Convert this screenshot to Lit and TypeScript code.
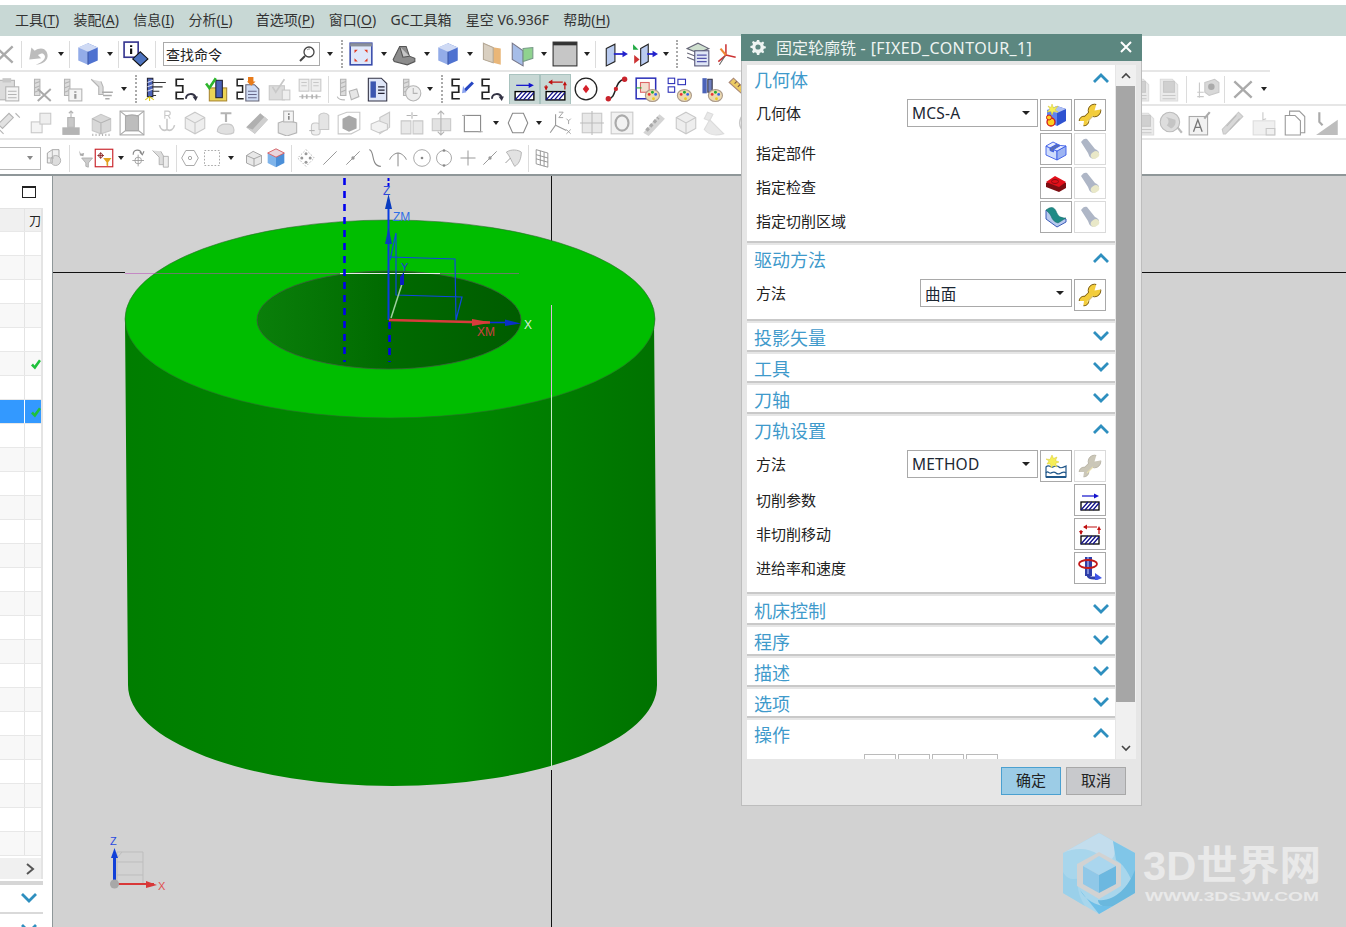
import { LitElement, html, css, svg, TemplateResult } from 'lit'
import { customElement } from 'lit/decorators.js'

// grey strokes used by the disabled toolbar icons
const G = '#b4b4b4'
const L = '#dcdcdc'
const M = '#c8c8c8'

const millShape = (c = G) => svg`<path d="M6 3h5v15H6z" fill="${L}" stroke="${c}"/><path d="M6 7l5-2M6 11l5-2M6 15l5-2" stroke="${c}"/>`
const pathS = svg`<path d="M10 3H3v6h6v6H3v6h7" fill="none" stroke="#222" stroke-width="1.6"/>`
const hatch = svg`<rect x="3" y="14" width="18" height="8" fill="#fff" stroke="#000" stroke-width="1.3"/><path d="M3 22l7-8M7 22l7-8M11 22l7-8M15 22l6-7" stroke="#11118a" stroke-width="1.3"/>`
const palette = svg`<ellipse cx="17" cy="18" rx="6.5" ry="5.5" fill="#ecd9b0" stroke="#a98"/><circle cx="14" cy="17" r="1.3" fill="#e33"/><circle cx="17" cy="15" r="1.3" fill="#2a3"/><circle cx="20" cy="17" r="1.3" fill="#36e"/><circle cx="18" cy="21" r="1.3" fill="#ec2"/>`

// open-ended spanner: shaft plus two round heads with a notch cut out of each
const spanner = (fill: string, edge: string) => svg`
	<path d="M6.5 17.500L16 8" stroke="${edge}" stroke-width="6.500"/>
	<circle cx="16.500" cy="7.500" r="6.300" fill="${fill}" stroke="${edge}"/>
	<circle cx="6" cy="18" r="4.800" fill="${fill}" stroke="${edge}"/>
	<path d="M6.500 17.500L16 8" stroke="${fill}" stroke-width="4.800"/>
	<path d="M16.500 7.500L19 -1L26 6Z" fill="#fff"/>
	<path d="M6 18L-1 18L5 25Z" fill="#fff"/>
	<path d="M15 13L9 19" stroke="#fff3b0" stroke-opacity=".6" stroke-width="1.200"/>`

const cube = svg`<path d="M12 2l9 4v12l-9 4z" fill="#4f72d0"/><path d="M12 2L3 6v12l9 4z" fill="#93ace8"/><path d="M12 2l9 4-9 4-9-4z" fill="#cfdaf4"/><path d="M12 10v12" stroke="#3c58a8"/>`

const ICONS: Record<string, TemplateResult> = {
	x: svg`<path d="M4 5l16 15M20 5L4 20" stroke="#aaa" stroke-width="2.2"/>`,
	undo: svg`<path d="M9 22c9-1 13-6 10-12-2-4-7-4-11-1L5 6l-2 11 11-1-3-3c3-2 5-2 6 0 2 3-2 7-8 9z" fill="#bcbcbc"/>`,
	cube,
	info: svg`<rect x="1" y="1" width="13" height="14" fill="#fff" stroke="#35358f" stroke-width="1.5"/><path d="M6.5 4h2v1.6h-2zM6.5 7h2v5h-2z" fill="#111"/><path d="M16 10l7 6.5-7 6.5-7-6.5z" fill="#4e74c0" stroke="#111"/>`,
	fit: svg`<rect x="2" y="2" width="20" height="20" fill="#dfe7fa" stroke="#3346a8" stroke-width="1.4"/><rect x="2" y="2" width="20" height="3" fill="#8a8f99"/><path d="M6 8h3l-3 3zM18 8h-3l3 3zM6 19h3l-3-3zM18 19h-3l3-3z" fill="#e23a22"/>`,
	shade: svg`<path d="M2 17l6-12h6l3 9 5 2v3l-7 3-12-3z" fill="#8c8c8c" stroke="#555"/><path d="M8 5l3 10 6-1" fill="#c6c6c6" stroke="#555"/>`,
	tan: svg`<path d="M5 2l10 4 6 1v15l-7-2-9-3z" fill="#e9b678"/><path d="M5 2l9 4v14l-9-3z" fill="#d9cfc0" stroke="#b4a998"/>`,
	sec: svg`<path d="M3 2l10 7v14L3 17z" fill="#a6bde8" stroke="#778"/><path d="M13 7l9-1v10l-9 3z" fill="#8fd28f" stroke="#798"/>`,
	dark: svg`<rect x="1" y="1" width="22" height="22" fill="#c6c6c6" stroke="#333"/><rect x="1" y="1" width="22" height="3" fill="#333"/>`,
	vw1: svg`<path d="M3 7l8-4v16l-8 4z" fill="#b9cbf0" stroke="#222"/><path d="M10 12h10" stroke="#2222cc" stroke-width="1.6"/><path d="M18 9l5 3-5 3z" fill="#2222cc"/>`,
	vw2: svg`<path d="M8 7l7-4v16l-7 4z" fill="#b9cbf0" stroke="#222"/><path d="M1 3l5 5H1z" fill="#22aa44"/><path d="M2 13l5 4-5 4z" fill="#cc3333"/><path d="M14 12h6" stroke="#2222cc" stroke-width="1.6"/><path d="M19 9l5 3-5 3z" fill="#2222cc"/>`,
	layers: svg`<path d="M2 7l10-5 10 5-10 4z" fill="#cfe0cf" stroke="#667"/><path d="M2 11l10 4 10-4M2 15l10 4 10-4" fill="none" stroke="#667"/><rect x="9" y="9" width="13" height="14" fill="#dfe6f6" stroke="#557"/><path d="M11 13h9M11 16h9M11 19h9" stroke="#55a"/>`,
	axes: svg`<path d="M11 13V3M11 13l9 2M11 13l-7 6" stroke="#c33" stroke-width="1.4" fill="none"/><path d="M11 13l-5-6" stroke="#e83" stroke-width="2"/><path d="M10 14l-5 8" stroke="#666"/>`,
	clip: svg`<rect x="3" y="4" width="14" height="18" fill="${L}" stroke="${G}"/><rect x="6" y="2" width="8" height="4" fill="${M}"/><rect x="9" y="10" width="12" height="13" fill="#f4f4f4" stroke="${G}"/><path d="M11 14h8M11 17h8M11 20h8" stroke="${G}"/>`,
	millx: svg`${millShape()}<path d="M9 12l12 11M21 12L9 23" stroke="#aaa" stroke-width="1.8"/>`,
	milli: svg`${millShape()}<rect x="10" y="12" width="12" height="11" fill="#f4f4f4" stroke="${G}"/><path d="M15 14h2v1.5h-2zM15 16.500h2V21h-2z" fill="#999"/>`,
	millf: svg`<path d="M2 3l7 7v7h4v-7l-2-5" fill="${L}" stroke="${G}"/><path d="M12 15h10M13 18h8M15 21h4" stroke="#aaa" stroke-width="1.4"/>`,
	millb: svg`<path d="M5 2h5v17H5z" fill="#4b63b8" stroke="#223"/><path d="M5 6l5-2M5 10l5-2M5 14l5-2" stroke="#dde"/><path d="M10 6h12M10 10h9M10 14h6M10 18h3" stroke="#333"/><path d="M7 19l-4 3M7 19l4 3M7 19v4" stroke="#dc2"/>`,
	patha: svg`${pathS}<path d="M12 21c0-5 7-6 9-1" fill="none" stroke="#334" stroke-width="1.8"/><path d="M18 19h5l-2 4z" fill="#334"/>`,
	check: svg`<rect x="4" y="11" width="16" height="12" fill="#ecd455" stroke="#a83"/><rect x="10" y="4" width="6" height="16" fill="#4b63b8" stroke="#223"/><path d="M1 7l3 4 6-9" fill="none" stroke="#2db52d" stroke-width="2.4"/>`,
	pathd: svg`<path d="M8 3H2v6h5v6H2v6h6" fill="none" stroke="#222" stroke-width="1.4"/><path d="M10 8h8l4 4v11H10z" fill="#cfdcf5" stroke="#667"/><path d="M12 14h8M12 17h8M12 20h8" stroke="#668"/><path d="M12 1h5v4h2l-4 4-4-4h1z" fill="#e87b1a"/>`,
	gcheck: svg`<rect x="3" y="9" width="14" height="13" fill="${L}" stroke="${M}"/><path d="M6 10l3 5 8-12" fill="none" stroke="${M}" stroke-width="1.6"/><rect x="15" y="13" width="7" height="9" fill="#eee" stroke="${M}"/>`,
	gdocs: svg`<rect x="2" y="3" width="9" height="11" fill="#eee" stroke="${M}"/><rect x="13" y="3" width="9" height="11" fill="#eee" stroke="${M}"/><path d="M4 6h5M4 9h5M15 6h5M15 9h5M2 19h20" stroke="${M}"/><path d="M5 17v4M9 17v4M14 17v4M18 17v4" stroke="${G}" stroke-width="1.6"/>`,
	gtool: svg`${millShape()}<path d="M14 14l7-2 2 7-7 3z" fill="#e6e6e6" stroke="${G}"/><path d="M3 19c1 3 4 3 7 3" fill="none" stroke="${G}"/>`,
	docb: svg`<path d="M4 2h12l5 5v16H4z" fill="#dfe6f8" stroke="#334"/><rect x="6" y="5" width="5" height="15" fill="#3b56b0"/><path d="M13 10h6M13 13h6M13 16h6" stroke="#223"/>`,
	clock: svg`${millShape()}<circle cx="15" cy="16" r="7" fill="#eee" stroke="${G}"/><path d="M15 11v5h4" fill="none" stroke="${G}"/>`,
	pathf: svg`${pathS}<path d="M13 13l8-8 2 2-8 8z" fill="#2746c2"/><path d="M13 9l3 6-4 1z" fill="#8aa2ee"/>`,
	cut: svg`<path d="M4 8h13" stroke="#1212cc" stroke-width="1.2"/><path d="M16 5.500l5 2.500-5 2.500z" fill="#1212cc"/>${hatch}`,
	noncut: svg`<path d="M6 5h13M3 8v4M21 12V7" stroke="#c01010" stroke-width="1.2"/><path d="M9 2.500L5 5l4 2.500zM1 9h4l-2 4zM19 8h4l-2-4z" fill="#c01010"/>${hatch}`,
	circle: svg`<circle cx="12" cy="12" r="10" fill="#fff" stroke="#222" stroke-width="1.2"/><path d="M12 8l3 4-3 4-3-4z" fill="#d5202a"/>`,
	curve: svg`<path d="M4 21c8 0 5-17 15-18" fill="none" stroke="#222" stroke-width="1.4"/><circle cx="4" cy="21" r="2.500" fill="#c9242c"/><circle cx="19" cy="3" r="2.500" fill="#c9242c"/><circle cx="11" cy="12" r="2" fill="#c9242c"/>`,
	frame: svg`<rect x="2" y="2" width="18" height="19" fill="#fff" stroke="#2b2fb8" stroke-width="1.4"/><rect x="6" y="6" width="8" height="9" fill="#f2dfd0" stroke="#d66"/><path d="M2 11h5" stroke="#2a3"/>${palette}`,
	tree: svg`<rect x="2" y="2" width="6" height="5" fill="#fff" stroke="#2b2fb8"/><rect x="2" y="10" width="6" height="5" fill="#fff" stroke="#2b2fb8"/><rect x="11" y="3" width="7" height="5" fill="#fff" stroke="#2b2fb8"/>${palette}`,
	millp: svg`<path d="M5 2h4v14H5z" fill="#4b63b8"/><path d="M10 3h4v12h-4z" fill="#6f7fbf" stroke="#334"/>${palette}`,
	ruler: svg`<path d="M2 6l4-4 19 18-4 3z" fill="#eccb62" stroke="#a87"/><path d="M7 7l2-2M10 10l2-2M13 13l2-2M16 16l2-2" stroke="#754"/>`,
	wire: svg`<path d="M12 2l9 5v10l-9 5-9-5V7z" fill="#eee" stroke="${M}"/><path d="M3 7l9 5 9-5M12 12v10" stroke="${M}" fill="none"/>`,
	rsq: svg`<path d="M2 13l10-10 4 4-10 10z" fill="#e2e2e2" stroke="${G}"/><path d="M18 3l4 4M3 18l4 4" stroke="${G}"/>`,
	copy: svg`<rect x="3" y="11" width="10" height="10" fill="#f4f4f4" stroke="${M}"/><rect x="11" y="3" width="10" height="10" fill="#eee" stroke="${M}"/>`,
	ped: svg`<rect x="4" y="16" width="16" height="7" fill="${G}"/><rect x="9" y="7" width="6" height="9" fill="${M}" stroke="${G}"/><path d="M12 7V1M10 3l2-2 2 2" fill="none" stroke="${G}"/>`,
	boxr: svg`<path d="M3 8l8-4 9 4v11l-9 3-8-3z" fill="#d8d8d8" stroke="${M}"/><path d="M3 8l8 4 9-4M11 12v10" fill="none" stroke="${G}"/><path d="M3 23h18" stroke="${G}" stroke-width="2" stroke-dasharray="1 2"/>`,
	wsol: svg`<rect x="1" y="1" width="22" height="22" fill="none" stroke="#aaa"/><path d="M1 1l5 4h12l5-4M1 23l5-4h12l5 4" fill="none" stroke="#aaa"/><path d="M6 6c3-2 9-2 12 0v13H6z" fill="#bdbdbd" stroke="#aaa"/>`,
	hook: svg`<path d="M12 8v10c-3 2-6 0-7-4M12 18c3 2 6 0 7-4" fill="none" stroke="${M}" stroke-width="1.4"/><path d="M10 1h3a2 2 0 0 1 0 4h-3zM10 1v7M13 5l2 3" fill="none" stroke="${M}"/>`,
	lathe: svg`<path d="M4 20c0-6 5-7 7-7h3c5 0 6 5 5 8-3 2-11 2-15-1z" fill="#e0e0e0" stroke="${M}"/><path d="M7 3h10M12 3v8" stroke="${G}" stroke-width="2"/>`,
	wedge: svg`<path d="M2 16L15 3l7 6-12 13z" fill="#b0b0b0"/><path d="M2 16l8 6 12-13-3-3-11 12z" fill="#cfcfcf"/>`,
	boxi: svg`<path d="M3 12l8-3 9 3v9l-9 3-8-3z" fill="#e4e4e4" stroke="${G}"/><rect x="8" y="1" width="9" height="10" fill="#f4f4f4" stroke="${G}"/><path d="M12 3h1.500v1.500H12zM12 5.500h1.500V9H12z" fill="#888"/>`,
	cyls: svg`<rect x="5" y="12" width="8" height="11" rx="3" fill="#eee" stroke="${M}"/><path d="M12 5c2-3 7-3 9 0v13h-9z" fill="#e4e4e4" stroke="${M}"/><path d="M3 19h5" stroke="${G}"/>`,
	wbox: svg`<path d="M2 5l8-3h12v16l-8 4H2z" fill="none" stroke="${M}"/><path d="M6 8l6-3 7 3v9l-7 3-6-3z" fill="#a8a8a8"/>`,
	plane: svg`<path d="M10 7l9-5v14l-9 6z" fill="#e6e6e6" stroke="${M}"/><path d="M2 13l7-3 8 3v5l-8 3-7-3z" fill="#f2f2f2" stroke="${M}"/>`,
	twins: svg`<path d="M2 10h9v12H2zM13 10h9v12h-9z" fill="#e8e8e8" stroke="${M}"/><path d="M7 5h4M17 5h-4M12 2v6" stroke="${G}"/>`,
	carr: svg`<path d="M3 8h17v11H3z" fill="#e2e2e2" stroke="${M}"/><path d="M11 1v22M8 4l3-3 3 3M8 20l3 3 3-3" fill="none" stroke="${G}"/>`,
	sq: svg`<rect x="4" y="5" width="15" height="15" fill="none" stroke="#888"/><path d="M2 5h4M17 20h4" stroke="#aaa"/>`,
	hex: svg`<path d="M7 3h10l4 9-4 9H7l-4-9z" fill="none" stroke="#888"/>`,
	xyz: svg`<path d="M7 14V4M7 14l10 5M7 14l-5 7" stroke="#999" fill="none"/><path d="M10 2h4l-4 5h4M17 8l2 2 2-2M19 10v3M17 18l4 4M21 18l-4 4" fill="none" stroke="#999" stroke-width=".8"/>`,
	csq: svg`<rect x="3" y="3" width="18" height="18" fill="#e8e8e8" stroke="${M}"/><path d="M12 1v22M1 12h22" stroke="#bbb"/>`,
	osq: svg`<rect x="2" y="2" width="20" height="20" fill="#f2f2f2" stroke="${M}"/><ellipse cx="12" cy="12" rx="6" ry="7" fill="none" stroke="#aaa" stroke-width="2"/>`,
	tex: svg`<path d="M3 21L18 4l5 4-15 16z" fill="#d4d4d4"/><path d="M6 19l11-12" stroke="#aaa" stroke-width="3" stroke-dasharray="3 2"/>`,
	lamp: svg`<path d="M6 2l-3 6 5 2 3-6zM8 9L3 18c4 5 11 6 18 4z" fill="#e8e8e8" stroke="${L}"/>`,
	paren: svg`<path d="M14 2C6 8 6 16 14 22" fill="none" stroke="${M}" stroke-width="1.4"/>`,
	gbase: svg`<path d="M4 3h11l5 5v15H4z" fill="#eaeaea" stroke="${L}"/><rect x="7" y="5" width="10" height="10" fill="#d0d0d0" stroke="${M}"/><path d="M6 18h12M6 21h12" stroke="${M}"/>`,
	gcam: svg`<path d="M3 15h6M5 6v14M3 19h6" stroke="${M}"/><path d="M10 6l9-3 4 3v9l-9 3-4-3z" fill="#d8d8d8" stroke="${M}"/><circle cx="16" cy="10" r="3" fill="#aaa"/>`,
	globe: svg`<circle cx="11" cy="11" r="9" fill="#ddd" stroke="#bbb"/><path d="M6 6c4 1 5 6 2 8l4 3c3-1 5-4 4-8" fill="#c4c4c4"/><path d="M18 16l4 5" stroke="#bbb" stroke-width="2"/>`,
	bigA: svg`<rect x="2" y="6" width="17" height="17" fill="#f2f2f2" stroke="#aaa"/><path d="M6 20l4-11 4 11M7.500 16h5" fill="none" stroke="#777" stroke-width="1.200"/><path d="M16 8l5-6" stroke="#aaa" stroke-width="2"/>`,
	rod: svg`<path d="M4 22L3 18 18 2l4 4L6 22z" fill="#d8d8d8" stroke="${M}"/><path d="M7 15l9-10M10 18l9-10" stroke="#bbb"/>`,
	tab: svg`<rect x="2" y="10" width="20" height="13" fill="#f0f0f0" stroke="${L}"/><path d="M11 2v7l3-1M14 17h8v6h-8z" fill="none" stroke="${M}"/>`,
	pages: svg`<path d="M7 1h9l5 5v15H7z" fill="#fff" stroke="#999"/><path d="M3 5h9l5 5v13H3z" fill="#fff" stroke="#999"/>`,
	slope: svg`<path d="M1 23h20V9z" fill="#bdbdbd"/><path d="M4 2v9l3 3" fill="none" stroke="#aaa" stroke-width="2"/>`,
	grid: svg`<path d="M4 6l6-4h8v10l-6 6H4z" fill="#f0f0f0" stroke="#999"/><circle cx="14" cy="15" r="6" fill="#ddd" stroke="#aaa"/><path d="M4 12h8M10 2v16" stroke="#aaa"/>`,
	filt: svg`<path d="M5 3l2 4 4-1-1 4-4-1z" fill="#aaa"/><path d="M8 12h13l-5 6v5l-3-1v-4z" fill="#ccc" stroke="#aaa"/>`,
	filtr: svg`<rect x="1.500" y="1.500" width="21" height="21" fill="#fff" stroke="#c9242c" stroke-width="1.4"/><path d="M8 5v8M4 9h8" stroke="#822"/><circle cx="8" cy="9" r="2.500" fill="none" stroke="#822"/><path d="M11 12h10l-4 5v5l-2-1v-4z" fill="#e2a21e"/>`,
	target: svg`<path d="M11 8v14M4 15h14" stroke="#999"/><circle cx="11" cy="15" r="4" fill="none" stroke="#999"/><path d="M5 8c0-7 9-7 10-1M13 5l3 3 2-4" fill="none" stroke="#888" stroke-width="1.4"/>`,
	gfilt: svg`<path d="M3 3l8 8v9h6v-9l-4-7" fill="#ddd" stroke="#aaa"/><path d="M16 10h6v13h-6z" fill="#eee" stroke="#aaa"/>`,
	hexo: svg`<path d="M7 3h10l5 9-5 9H7l-5-9z" fill="none" stroke="#999"/><circle cx="12" cy="12" r="2" fill="none" stroke="#999"/>`,
	dots: svg`<path d="M3 3h18v18H3z" fill="none" stroke="#999" stroke-dasharray="2 2"/>`,
	gbox: svg`<path d="M3 9l8-5 10 5v9l-9 4-9-4z" fill="#e8e8e8" stroke="#999"/><path d="M3 9l9 4 9-4M12 13v9" fill="none" stroke="#999"/>`,
	bbox: svg`<path d="M12 1l10 5v12l-10 5z" fill="#4b8fd8"/><path d="M12 1L2 6v12l10 5z" fill="#7fb4ea"/><path d="M12 1l10 5-10 5L2 6z" fill="#e9d5dc" stroke="#d55"/>`,
	ddots: svg`<path d="M12 2l10 10-10 10L2 12z" fill="none" stroke="#aaa" stroke-dasharray="2 2"/><circle cx="12" cy="7" r="1.800" fill="#999"/><circle cx="7" cy="12" r="1.800" fill="#999"/><circle cx="17" cy="12" r="1.800" fill="#999"/><circle cx="12" cy="17" r="1.800" fill="#999"/>`,
	line: svg`<path d="M4 20L20 4" stroke="#999" stroke-width="1.2"/>`,
	lined: svg`<path d="M4 20L20 4" stroke="#999" stroke-width="1.2"/><circle cx="12" cy="12" r="2" fill="#999"/>`,
	scurve: svg`<path d="M5 2c2 0 3 2 4 6 1 5 2 14 10 14" fill="none" stroke="#888" stroke-width="1.3"/>`,
	fork: svg`<path d="M12 22V6M2 14c2-5 7-8 10-8s8 3 10 8" fill="none" stroke="#888" stroke-width="1.2"/>`,
	cdot: svg`<circle cx="12" cy="12" r="10" fill="none" stroke="#999"/><circle cx="12" cy="12" r="1.600" fill="#888"/>`,
	cring: svg`<circle cx="12" cy="12" r="9" fill="none" stroke="#999"/><circle cx="12" cy="3" r="1.600" fill="#888"/><circle cx="12" cy="21" r="1.600" fill="#888"/>`,
	plus: svg`<path d="M12 3v18M3 12h18" stroke="#999" stroke-width="1.2"/>`,
	surf: svg`<path d="M4 5c6-4 14-3 18 0 0 6-2 14-8 17C10 16 8 9 4 5z" fill="#e2e2e2" stroke="#aaa"/><path d="M3 18l6-6" stroke="#888"/>`,
	mesh: svg`<path d="M5 2l14 4v17L5 19z" fill="none" stroke="#888"/><path d="M10 3.500v17M14.500 5v17M5 8l14 4M5 13l14 4" stroke="#888"/>`,
	// dialog icons
	create: svg`<path d="M13 3l9 3v12l-9 5z" fill="#2e52d0"/><path d="M13 3L3 7v11l10 5z" fill="#5f82ee"/><path d="M3 7l10-4 9 3-9 4z" fill="#aebff4"/><path d="M8 1l1.500 4L14 3l-3 4 3 2-4.500-.5L8 12 7 8.500 3 9l3-3-2-3 3 1.500z" fill="#f5ee56" stroke="#d8c830" stroke-width=".5"/><circle cx="7" cy="19" r="4" fill="#ffcf20" stroke="#d01818" stroke-width="1.3"/><circle cx="5" cy="14.500" r="2.500" fill="#ffcf20" stroke="#d01818"/>`,
	wrench: spanner('#f3cd3c', '#7d5e10'),
	wrenchg: spanner('#cbc7b8', '#bab6a8'),
	part: svg`<g stroke="#3a5be6" stroke-width=".9" stroke-linejoin="round">
		<path d="M2 9V18L13 23V14Z" fill="#cfdcfb"/>
		<path d="M13 14V23L22 18V9Z" fill="#9db4f2"/>
		<path d="M6 11L13 7L16.500 8.500L9.500 12.500V15L6 13.500Z" fill="#5a6fb0"/>
		<path d="M2 9L9 5L13 7L6 11Z" fill="#e6ecff"/>
		<path d="M9.500 12.500L16.500 8.500L22 9L13 14Z" fill="#e6ecff"/>
	</g>`,
	torch: svg`<path d="M3 5c2-3 4-4 6-3l8 10c2 1 4 2 4 4 0 4-5 7-8 5-2-1-2-3-3-5z" fill="#aeb6c6"/><ellipse cx="17" cy="18" rx="4.500" ry="3.500" transform="rotate(-35 17 18)" fill="#e9e8c8"/>`,
	red: svg`<path d="M2 12l9-6 11 6v5l-7 4-13-5z" fill="#7d0d12"/><path d="M2 11l9-6 11 6-7 5z" fill="#e30f1a"/><ellipse cx="11" cy="10.500" rx="3.500" ry="2" fill="none" stroke="#8d0d12"/>`,
	teal: svg`<path d="M2 5v9l11 8 9-5v-3l-9-2z" fill="#b8c9ee" stroke="#3a5ab8"/><path d="M2 5c5-4 8-3 10 1 2 5 4 7 10 7l-8 5c-4-1-6-4-7-7-1-2-3-4-5-6z" fill="#1f8a86" stroke="#146b68" stroke-width=".5"/>`,
	method: svg`<path d="M2 13c3-3 5 1 7 0s4-2 6 0 5 0 7-1v11H2z" fill="#fff" stroke="#20578a" stroke-width="1.200"/><path d="M2 19c2-3 3 1 5 0s3-2 5 0 3 1 5 0 3-2 5 0" fill="none" stroke="#20578a" stroke-width="1.200"/><path d="M2 23h20" stroke="#20578a" stroke-width="2"/><path d="M8 1l1.500 3.500L13 3l-1.500 3.500L15 8l-3.500 1.500L13 13 9 11l-2 3-.5-4L3 10l2-3-3-2 4 .5z" fill="#f5ee56" stroke="#d8c830" stroke-width=".5"/>`,
	feed: svg`<rect x="7" y="1" width="7" height="19" fill="#2f3fa8"/><path d="M10 1v19" stroke="#98a5e4" stroke-width="1.500"/><ellipse cx="10" cy="8" rx="9" ry="4" fill="none" stroke="#c21818" stroke-width="1.800"/><path d="M10 18c0 4 3 4 6 4h2" fill="none" stroke="#2f3fa8" stroke-width="3"/><path d="M17 17l7 5-7 3z" fill="#3f55e8"/>`,
	chk: svg`<path d="M2 13l4-4 3 4 9-12 4 3-12 17z" fill="#1fc13c"/>`,
}

const icon = (name: string) => html`<svg viewBox="0 0 24 24" class="glyph">${ICONS[name]}</svg>`

type Item = [number, string]

const ROW1: Item[] = [[4, 'x'], [21, '|'], [39, 'undo'], [61, 'v'], [69, '|'], [88, 'cube'], [110, 'v'], [118, '|'], [136, 'info'], [155, '|'], [241.5, 'search'], [330, 'v'], [342, ':'], [361, 'fit'], [384, 'v'], [404, 'shade'], [427, 'v'], [448, 'cube'], [470, 'v'], [491, 'tan'], [522, 'sec'], [544, 'v'], [565, 'dark'], [587, 'v'], [595, '|'], [616, 'vw1'], [645, 'vw2'], [666, 'v'], [677, ':'], [698, 'layers'], [727, 'axes']]
const ROW2: Item[] = [[9, 'clip'], [41, 'millx'], [71, 'milli'], [102, 'millf'], [124, 'v'], [136, ':'], [155, 'millb'], [186, 'patha'], [218, 'check'], [248, 'pathd'], [279, 'gcheck'], [310, 'gdocs'], [328, '|'], [347, 'gtool'], [377, 'docb'], [410, 'clock'], [430, 'v'], [442, ':'], [462, 'pathf'], [492, 'patha'], [524.5, '#cut'], [555.5, '#noncut'], [586, 'circle'], [617, 'curve'], [647, 'frame'], [679, 'tree'], [710, 'millp'], [740, 'ruler'], [1140, 'gbase'], [1169, 'gbase'], [1186, '|'], [1207, 'gcam'], [1224, '|'], [1243, 'x'], [1264, 'v']]
const ROW3: Item[] = [[9, 'rsq'], [41, 'copy'], [71, 'ped'], [102, 'boxr'], [132, 'wsol'], [167, 'hook'], [195, 'wire'], [226, 'lathe'], [257, 'wedge'], [288, 'boxi'], [319, 'cyls'], [349, 'wbox'], [382, 'plane'], [412, 'twins'], [442, 'carr'], [473, 'sq'], [496, 'v'], [518, 'hex'], [539, 'v'], [561, 'xyz'], [592, 'csq'], [622, 'osq'], [653, 'tex'], [686, 'wire'], [714, 'lamp'], [744, 'paren'], [1145, 'gbase'], [1171, 'globe'], [1200, 'bigA'], [1232, 'rod'], [1264, 'tab'], [1295, 'pages'], [1328, 'slope']]
const ROW4: Item[] = [[20, 'drop'], [54, 'grid'], [69, '|'], [85, 'filt'], [104, 'filtr'], [121, 'v'], [139, 'target'], [160, 'gfilt'], [176, '|'], [190, 'hexo'], [212, 'dots'], [231, 'v'], [254, 'gbox'], [276, 'bbox'], [291, '|'], [306, 'ddots'], [330, 'line'], [353, 'lined'], [375, 'scurve'], [398, 'fork'], [422, 'cdot'], [444, 'cring'], [468, 'plus'], [490, 'lined'], [513, 'surf'], [528, '|'], [542, 'mesh']]

const MENU = [
	['工具(', 'T', ')'], ['装配(', 'A', ')'], ['信息(', 'I', ')'], ['分析(', 'L', ')'],
	['首选项(', 'P', ')'], ['窗口(', 'O', ')'], ['GC工具箱', '', ''], ['星空 V6.936F', '', ''], ['帮助(', 'H', ')'],
]

const CHECKED = [5, 7]
const SELECTED = 7

@customElement('app-root')
export class AppRoot extends LitElement {
	static styles = css`
		:host {
			display: block;
			position: relative;
			width: 1346px;
			height: 927px;
			overflow: hidden;
			background: #fff;
			font-family: "Noto Sans", "Noto Sans CJK SC", sans-serif;
			color: #222;
		}
		.menu {
			display: flex;
			align-items: center;
			gap: 14.3px;
			box-sizing: border-box;
			height: 31px;
			margin-top: 5px;
			padding: 0 0 3px 15px;
			background: #c8d8d5;
			font-size: 14px;
			white-space: nowrap;
			color: #333;
		}
		.menu .wide { margin-left: 9px; }
		.menu u { text-underline-offset: 2px; }
		.row {
			display: flex;
			align-items: center;
			height: 34px;
			box-sizing: border-box;
			padding-top: 2px;
			border-bottom: 2px solid #e6e6e6;
			overflow: hidden;
		}
		.row.tall {
			height: 36px;
			border-bottom: 0;
			padding-bottom: 2px;
			background: linear-gradient(#e6e6e6, #e6e6e6) left bottom / 1270px 2px no-repeat;
		}
		.row.last { height: 36px; border-bottom: 2px solid #8f9799; }
		.glyph { display: block; width: 100%; height: 100%; overflow: hidden; }
		.tb { flex: none; width: 26px; height: 26px; }
		.row.small .tb { width: 20px; height: 20px; }
		.sep { flex: none; width: 1px; height: 27px; background: #dcdcdc; }
		.dotsep { flex: none; width: 3px; height: 28px; border-left: 2px dotted #aaa; box-sizing: border-box; }
		.caret { flex: none; width: 0; height: 0; border: 3px solid transparent; border-top: 4px solid #222; border-bottom: 0; }
		.search {
			flex: none;
			display: flex;
			align-items: center;
			justify-content: space-between;
			box-sizing: border-box;
			width: 157px;
			height: 24px;
			padding: 0 3px 0 2px;
			border: 1px solid #aaa;
			font-size: 14px;
			color: #222;
		}
		.search svg { width: 18px; height: 18px; }
		.drop {
			flex: none;
			display: flex;
			align-items: center;
			justify-content: flex-end;
			box-sizing: border-box;
			width: 41px;
			height: 23px;
			padding-right: 7px;
			border: 1px solid #bbb;
			border-left: 0;
		}
		.drop i { width: 0; height: 0; border: 3px solid transparent; border-top: 4px solid #888; border-bottom: 0; }
		.hl {
			flex: none;
			box-sizing: border-box;
			width: 31px;
			height: 31px;
			padding: 2px;
			background: #c8d8d5;
			border: 1px solid #a9c3bf;
		}
		.main { display: flex; height: 751px; }
		.side {
			flex: none;
			display: flex;
			flex-direction: column;
			box-sizing: border-box;
			width: 53px;
			border-right: 1px solid #8f9799;
			overflow: hidden;
		}
		.side > * { flex: none; }
		.side-top { display: flex; justify-content: flex-end; height: 32px; padding: 10px 16px 0 0; box-sizing: border-box; }
		.maxi { width: 14px; height: 12px; box-sizing: border-box; border: 1px solid #222; border-top-width: 2px; }
		.table { width: 41px; border-right: 2px solid #e4e4e4; height: 671px; overflow: hidden; }
		.tr { display: flex; height: 24px; box-sizing: border-box; border-bottom: 1px solid #e8e8e8; }
		.tr.alt { background: #f8f8f8; }
		.tr.head { background: #f0f0f0; border-top: 1px solid #e4e4e4; font-size: 12px; }
		.tr.head .c2 { line-height: 25px; }
		.tr.sel { background: #3399ff; }
		.c1 { flex: none; width: 25px; border-right: 1px solid #e4e4e4; box-sizing: border-box; }
		.c2 { flex: none; width: 16px; overflow: hidden; white-space: nowrap; padding-left: 4px; box-sizing: border-box; line-height: 24px; }
		.c2 svg { display: block; width: 12px; height: 14px; margin: 6px 0 0 1px; }
		.tr.sel .c1 { border-right-color: #fff; }
		.hscroll {
			height: 21px;
			margin-top: -21px;
			position: relative;
			background: #f0f0f0;
			width: 41px;
			display: flex;
			align-items: center;
			justify-content: flex-end;
			padding-right: 6px;
			box-sizing: border-box;
		}
		.hscroll svg { width: 10px; height: 12px; }
		.bar { height: 4px; margin-top: 2px; width: 43px; background: #d6d6d6; }
		.side-sec { display: flex; justify-content: flex-end; box-sizing: content-box; width: 37px; padding: 8px 6px 0 0; height: 19px; border-bottom: 2px solid #d9d9d9; }
		.side-sec.end { border: 0; padding-top: 10px; }
		.view { flex: 1; background: #d2d2d2; min-width: 0; }
		.view svg { display: block; }
		.view text { font-family: "Liberation Sans", sans-serif; }
		.view text.cjk { font-family: "Liberation Sans", "Noto Sans CJK SC", sans-serif; font-weight: 700; }

		.dialog {
			position: absolute;
			left: 741px;
			top: 34px;
			width: 401px;
			height: 772px;
			box-sizing: border-box;
			display: flex;
			flex-direction: column;
			background: #e6e6e6;
			border: 1px solid #bdbdbd;
			border-top: 0;
		}
		.title {
			flex: none;
			display: flex;
			align-items: center;
			box-sizing: border-box;
			height: 27px;
			margin: 0 -1px;
			padding: 0 9px 1px;
			background: #5c8780;
			color: #eef4f2;
			font-size: 16px;
			white-space: nowrap;
		}
		.title .gear { width: 16px; height: 16px; margin-right: 10px; }
		.title .name { flex: 1; }
		.title .lat { letter-spacing: 0.4px; }
		.title .close { width: 12px; height: 12px; margin-right: 1px; }
		.body { flex: none; display: flex; gap: 1px; height: 694px; margin: 4px 0 0 5px; }
		.content { flex: none; width: 368px; height: 694px; overflow: hidden; }
		.section { background: #fff; border-bottom: 2px solid #c9c9c9; margin-bottom: 2px; }
		.sec-head {
			display: flex;
			align-items: center;
			justify-content: space-between;
			box-sizing: border-box;
			height: 27px;
			padding: 2px 6px 0 7px;
			font-size: 18px;
			line-height: 24px;
			color: #3f9acb;
		}
		.sec-head svg { width: 16px; height: 10px; margin-top: -3px; }
		.sec-rows { display: flex; flex-direction: column; gap: 2px; padding: 7px 9px 8px; }
		.line { display: flex; align-items: flex-start; gap: 2px; height: 32px; }
		.label { flex: 1; font-size: 15px; line-height: 28px; color: #222; white-space: nowrap; }
		.label.mid { line-height: 32px; }
		.label.low { line-height: 40px; }
		.select {
			flex: none;
			display: flex;
			align-items: center;
			justify-content: space-between;
			box-sizing: border-box;
			height: 28px;
			padding: 0 7px 0 4px;
			border: 1px solid #a9a9a9;
			font-size: 15.5px;
			letter-spacing: 0.2px;
			color: #1c2733;
		}
		.select.w131 { width: 131px; }
		.select.w152 { width: 152px; }
		.select i { width: 0; height: 0; border: 4px solid transparent; border-top: 4px solid #222; border-bottom: 0; }
		.btn { flex: none; box-sizing: border-box; width: 32px; height: 32px; padding: 3px; background: #fff; border: 1px solid #a9a9a9; }
		.btn.off { border-color: #dadada; }
		.ops { display: flex; justify-content: center; gap: 2px; padding-top: 7px; }
		.ops .btn { border-color: #bbb; }
		.vbar { flex: none; display: flex; flex-direction: column; width: 20px; height: 694px; background: #f0f0f0; }
		.vbar .cap { flex: none; display: flex; align-items: center; justify-content: center; height: 21px; }
		.vbar .cap svg { width: 10px; height: 7px; }
		.vbar .thumb { flex: none; height: 616px; width: 19px; background: #a6a6a6; }
		.vbar .gap { flex: 1; }
		.foot { flex: 1; display: flex; justify-content: flex-end; gap: 5px; padding: 8px 15px 0 0; }
		.act { box-sizing: border-box; width: 60px; height: 28px; font-size: 15px; line-height: 25px; text-align: center; color: #222; border: 1px solid #a8a8a8; background: #c8c9cc; }
		.act.primary { background: #9ccce6; border-color: #4aa0d0; }
	`

	private renderRow(items: Item[], cls: string) {
		const small = cls.includes('small')
		let right = 0
		return html`<div class="row ${cls}">
			${items.map(([cx, name]) => {
				let w = small ? 20 : 26
				if (name === '|') w = 1
				else if (name === ':') w = 3
				else if (name === 'v') w = 6
				else if (name === 'search') w = 157
				else if (name === 'drop') w = 41
				else if (name[0] === '#') w = 31
				const ml = cx - w / 2 - right
				right = cx + w / 2
				const st = `margin-left:${ml}px`
				if (name === '|') return html`<div class="sep" style=${st}></div>`
				if (name === ':') return html`<div class="dotsep" style=${st}></div>`
				if (name === 'v') return html`<div class="caret" style=${st}></div>`
				if (name === 'search')
					return html`<div class="search" style=${st}>查找命令
						<svg viewBox="0 0 18 18"><circle cx="11" cy="7" r="5" fill="#fff" stroke="#444" stroke-width="1.3"/><path d="M7 11l-5 5" stroke="#444" stroke-width="2"/><path d="M9 5c1-1 2-1 3-1" stroke="#888" fill="none"/></svg>
					</div>`
				if (name === 'drop') return html`<div class="drop" style=${st}><i></i></div>`
				if (name[0] === '#') return html`<div class="hl" style=${st}>${icon(name.slice(1))}</div>`
				return html`<div class="tb" style=${st}>${icon(name)}</div>`
			})}
		</div>`
	}

	private renderViewport() {
		return html`<svg width="1293" height="751" viewBox="53 176 1293 751">
			<defs>
				<linearGradient id="side" x1="0" x2="1" y1="0" y2="0">
					<stop offset="0" stop-color="#007d00" />
					<stop offset="0.35" stop-color="#008600" />
					<stop offset="0.6" stop-color="#008900" />
					<stop offset="1" stop-color="#007200" />
				</linearGradient>
				<linearGradient id="hole" x1="0" x2="1" y1="0" y2="0">
					<stop offset="0" stop-color="#0a7f0a" />
					<stop offset="0.5" stop-color="#006a00" />
					<stop offset="1" stop-color="#005c00" />
				</linearGradient>
			</defs>
			<path d="M53 272.500H125M1141 272.500H1346" stroke="#111" />
			<path d="M551.500 176V241M551.500 770V927" stroke="#111" />
			<path d="M125 319L128 685A264.500 101 0 0 0 657 685L654 319Z" fill="url(#side)" />
			<ellipse cx="390" cy="319" rx="265" ry="99" fill="#00bd00" stroke="#2f6a2f" stroke-width=".6" />
			<ellipse cx="389" cy="320" rx="132" ry="49" fill="url(#hole)" stroke="#3d5a3d" stroke-width=".8" />
			<path d="M125 273.500H519" stroke="#b84cb8" stroke-opacity=".55" />
			<path d="M340 273.500H440" stroke="#e8e8e8" />
			<path d="M551.500 305V395" stroke="#d8b8d8" />
			<path d="M551.500 395V770" stroke="#c8e8c8" />
			<!-- datum and tool axis -->
			<path d="M344.500 178V362M389.500 322V362" stroke="#0000ee" stroke-width="2.600" stroke-dasharray="7 6" />
			<path d="M388.500 178V186" stroke="#0000ee" stroke-width="2" stroke-dasharray="3 2" />
			<path d="M388.500 200V320" stroke="#0a3ce0" stroke-width="2" />
			<path d="M385 209L388.500 194L392 209ZM385 244L388.500 228L392 244Z" fill="#0a3cc0" />
			<path d="M396 233V295L462 297L456 320L455 259L390 257M396 233L390 260" fill="none" stroke="#0f47e0" stroke-width="1.200" />
			<path d="M391 318L402 284" stroke="#9ed09e" stroke-width="1.500" />
			<path d="M400 277L404 272V285H400Z" fill="#0a1fc0" />
			<path d="M389 320L490 322.500" stroke="#d93c3c" stroke-width="2.600" />
			<path d="M472 319L492 322.500L472 326Z" fill="#d93c3c" />
			<path d="M490 322.500H506" stroke="#0a2fe0" stroke-width="1.600" />
			<path d="M505 319.500L521 323.500L505 326Z" fill="#0a2fc8" />
			<text x="383" y="195" font-size="12" fill="#3049d8">Z</text>
			<text x="393" y="221" font-size="12" fill="#2f6fe6">ZM</text>
			<text x="401" y="271" font-size="11" fill="#2030e0">Y</text>
			<text x="477" y="336" font-size="12" fill="#d04040">XM</text>
			<text x="524" y="329" font-size="12" fill="#d8f0d8">X</text>
			<!-- work coordinate triad -->
			<path d="M117 852H143V884H117ZM122 852L117 858M117 862H143M117 875H143" fill="none" stroke="#bdbdbd" />
			<path d="M114.500 883V858" stroke="#1140d8" stroke-width="3" />
			<path d="M111 858L114.500 848L118 858Z" fill="#1140d8" />
			<path d="M115 884H154" stroke="#d83838" stroke-width="2" />
			<path d="M146 881L157 885L146 888Z" fill="#d83838" />
			<circle cx="114.500" cy="884" r="4.500" fill="#a8a8a8" />
			<text x="110" y="845" font-size="11" fill="#2a4be0">Z</text>
			<text x="158" y="890" font-size="11" fill="#e05050">X</text>
			<!-- watermark -->
			<path d="M1099 833L1135 853V893L1099 914L1063 893V853Z" fill="#a8d6ec" />
			<path d="M1099 833L1113 841C1118 857 1112 866 1099 855C1088 847 1074 848 1063 853Z" fill="#c3dded" />
			<path d="M1113 841L1135 853V893C1133 880 1126 866 1116 860Z" fill="#80c6e8" />
			<path d="M1135 870V893L1113 906C1103 909 1098 904 1098 900C1114 902 1128 888 1135 870Z" fill="#6ab8de" />
			<path d="M1080 890L1099 914L1113 906C1098 908 1085 900 1080 890Z" fill="#6ebfe8" />
			<path d="M1063 872V893L1085 906C1078 895 1076 884 1080 878C1074 880 1067 880 1063 872Z" fill="#9ad0ea" />
			<path d="M1099 852L1121 864V886L1099 899L1077 886V864Z" fill="#d2d2d2" />
			<path d="M1099 856L1116 866L1099 875L1083 866Z" fill="#aad6ee" />
			<path d="M1083 866L1099 875V893L1083 884Z" fill="#90c8e8" />
			<path d="M1116 866V884L1099 893V875Z" fill="#6cb8e0" />
			<text class="cjk" x="1143" y="880" font-size="41" fill="#e9e9e9" textLength="178" lengthAdjust="spacingAndGlyphs">3D世界网</text>
			<text x="1145" y="901" font-size="13" font-weight="700" fill="#e9e9e9" textLength="174" lengthAdjust="spacingAndGlyphs">WWW.3DSJW.COM</text>
		</svg>`
	}

	private renderSide() {
		const rows = Array.from({ length: 26 }, (_, i) => i)
		return html`<div class="side">
			<div class="side-top"><div class="maxi"></div></div>
			<div class="table">
				<div class="tr head"><div class="c1"></div><div class="c2">刀</div></div>
				${rows.map(
					(i) => html`<div class="tr ${i % 2 ? 'alt' : ''} ${i === SELECTED ? 'sel' : ''}">
						<div class="c1"></div>
						<div class="c2">${CHECKED.includes(i) ? html`<svg viewBox="0 0 24 24">${ICONS.chk}</svg>` : ''}</div>
					</div>`,
				)}
			</div>
			<div class="hscroll"><svg viewBox="0 0 10 12"><path d="M2 1l6 5-6 5" fill="none" stroke="#555" stroke-width="2"/></svg></div>
			<div class="bar"></div>
			<div class="side-sec">${this.chevron(false)}</div>
			<div class="side-sec end">${this.chevron(false)}</div>
		</div>`
	}

	private chevron(open: boolean) {
		return html`<svg viewBox="0 0 16 10" width="16" height="10">
			<polyline points=${open ? '1,9 8,2 15,9' : '1,1 8,8 15,1'} fill="none" stroke="#2e8fbf" stroke-width="2.800" />
		</svg>`
	}

	private btn(name: string, off = false) {
		return html`<div class="btn ${off ? 'off' : ''}">${icon(name)}</div>`
	}

	private section(title: string, open: boolean, rows?: TemplateResult) {
		return html`<div class="section">
			<div class="sec-head"><span>${title}</span>${this.chevron(open)}</div>
			${rows ?? ''}
		</div>`
	}

	private line(label: string, cls: string, ...ctrls: TemplateResult[]) {
		return html`<div class="line"><div class="label ${cls}">${label}</div>${ctrls}</div>`
	}

	private select(value: string, cls: string) {
		return html`<div class="select ${cls}"><span>${value}</span><i></i></div>`
	}

	private renderDialog() {
		return html`<div class="dialog">
			<div class="title">
				<svg class="gear" viewBox="0 0 16 16"><path d="M8 1l1.200 0 .5 2 1.500.6 1.800-1 1.200 1.200-1 1.800.6 1.500 2 .5v1.700l-2 .5-.6 1.500 1 1.800-1.200 1.200-1.800-1-1.500.6-.5 2H7l-.5-2-1.500-.6-1.800 1L2 12.600l1-1.800-.6-1.500-2-.5V7.100l2-.5.6-1.500-1-1.800L3.200 2.100l1.800 1 1.500-.6.5-1.500z" fill="#eef4f2"/><circle cx="8" cy="8" r="2.600" fill="#5c8780"/></svg>
				<span class="name">固定轮廓铣<span class="lat"> - [FIXED_CONTOUR_1]</span></span>
				<svg class="close" viewBox="0 0 12 12"><path d="M1 1l10 10M11 1L1 11" stroke="#fff" stroke-width="2"/></svg>
			</div>
			<div class="body">
				<div class="content">
					${this.section('几何体', true, html`<div class="sec-rows">
						${this.line('几何体', '', this.select('MCS-A', 'w131'), this.btn('create'), this.btn('wrench'))}
						${this.line('指定部件', 'low', this.btn('part'), this.btn('torch', true))}
						${this.line('指定检查', 'low', this.btn('red'), this.btn('torch', true))}
						${this.line('指定切削区域', 'low', this.btn('teal'), this.btn('torch', true))}
					</div>`)}
					${this.section('驱动方法', true, html`<div class="sec-rows">
						${this.line('方法', '', this.select('曲面', 'w152'), this.btn('wrench'))}
					</div>`)}
					${this.section('投影矢量', false)}
					${this.section('工具', false)}
					${this.section('刀轴', false)}
					${this.section('刀轨设置', true, html`<div class="sec-rows">
						${this.line('方法', '', this.select('METHOD', 'w131'), this.btn('method'), this.btn('wrenchg', true))}
						${this.line('切削参数', 'mid', this.btn('cut'))}
						${this.line('非切削移动', 'mid', this.btn('noncut'))}
						${this.line('进给率和速度', 'mid', this.btn('feed'))}
					</div>`)}
					${this.section('机床控制', false)}
					${this.section('程序', false)}
					${this.section('描述', false)}
					${this.section('选项', false)}
					${this.section('操作', true, html`<div class="ops">
						<div class="btn"></div><div class="btn"></div><div class="btn"></div><div class="btn"></div>
					</div>`)}
				</div>
				<div class="vbar">
					<div class="cap"><svg viewBox="0 0 10 7"><path d="M1 6l4-4 4 4" fill="none" stroke="#444" stroke-width="1.600"/></svg></div>
					<div class="thumb"></div>
					<div class="gap"></div>
					<div class="cap"><svg viewBox="0 0 10 7"><path d="M1 1l4 4 4-4" fill="none" stroke="#444" stroke-width="1.600"/></svg></div>
				</div>
			</div>
			<div class="foot">
				<div class="act primary">确定</div>
				<div class="act">取消</div>
			</div>
		</div>`
	}

	render() {
		return html`
			<div class="menu">
				${MENU.map(
					([a, u, b], i) => html`<span class=${i === 4 ? 'wide' : ''}>${a}<u>${u}</u>${b}</span>`,
				)}
			</div>
			${this.renderRow(ROW1, 'tall')}
			${this.renderRow(ROW2, '')}
			${this.renderRow(ROW3, '')}
			${this.renderRow(ROW4, 'last small')}
			<div class="main">
				${this.renderSide()}
				<div class="view">${this.renderViewport()}</div>
			</div>
			${this.renderDialog()}
		`
	}
}
